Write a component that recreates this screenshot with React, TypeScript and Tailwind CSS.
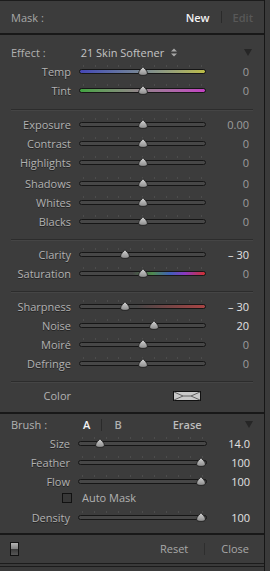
import React from "react";

const font = { fontFamily: '"Open Sans", "DejaVu Sans", sans-serif' };

type Slider = {
  label: string;
  value: string;
  pos: number;
  track?: string;
  bright?: boolean;
};

const ticks = Array.from({ length: 11 });

function Thumb({ pos }: { pos: number }) {
  return (
    <svg
      width="10"
      height="10"
      viewBox="0 0 10 10"
      className="absolute top-[-3px] -translate-x-1/2"
      style={{ left: `${pos}%` }}
    >
      <defs>
        <linearGradient id="thumbFill" x1="0" y1="0" x2="0" y2="1">
          <stop offset="0" stopColor="#d6d6d6" />
          <stop offset="1" stopColor="#8a8a8a" />
        </linearGradient>
      </defs>
      <path
        d="M5 0.6 C6 2.2 9.4 4.8 9.4 7 C9.4 8.7 8 9.4 5 9.4 C2 9.4 0.6 8.7 0.6 7 C0.6 4.8 4 2.2 5 0.6Z"
        fill="url(#thumbFill)"
        stroke="#1c1c1c"
        strokeWidth="0.9"
      />
    </svg>
  );
}

function Track({ pos, track, wide }: { pos: number; track?: string; wide?: boolean }) {
  return (
    <div className={`relative ${wide ? "w-[129px]" : "w-[127px]"} h-[5px]`}>
      <div className="absolute left-[4px] right-[4px] top-[-4px] flex justify-between">
        {ticks.map((_, i) => (
          <span key={i} className="w-px h-[2px] bg-[#4c4c4c]" />
        ))}
      </div>
      <div className={`h-[5px] rounded-full border border-[#161616] ${track ?? "bg-[#474747]"}`} />
      <Thumb pos={pos} />
    </div>
  );
}

function SliderRow({ s, wide }: { s: Slider; wide?: boolean }) {
  return (
    <div className="flex items-center h-[19px]">
      <span
        className={`${wide ? "w-[70px]" : "w-[71px]"} text-right text-[#b2b2b2] [text-shadow:0_1px_0_#222]`}
      >
        {s.label}
      </span>
      <div className={wide ? "ml-[8px]" : "ml-[8px]"}>
        <Track pos={s.pos} track={s.track} wide={wide} />
      </div>
      <span
        className={`flex-1 text-right ${wide ? "pr-[14px]" : "pr-[15px]"} ${
          s.bright ? "text-[#e2e2e2]" : "text-[#9c9c9c]"
        }`}
      >
        {s.value}
      </span>
    </div>
  );
}

function Separator() {
  return <div className="mx-[11px] h-px bg-[#2c2c2c] shadow-[0_1px_0_#454545]" />;
}

function DarkLine() {
  return <div className="h-[2px] bg-[#181818]" />;
}

function DownTriangle() {
  return (
    <svg width="8" height="7" viewBox="0 0 8 7">
      <path d="M0 0 H8 L4 7Z" fill="#262626" />
    </svg>
  );
}

const colorTracks = {
  temp: "bg-gradient-to-r from-[#4646b6] to-[#bcbc44]",
  tint: "bg-gradient-to-r from-[#3fa43f] to-[#c440c4]",
  sat: "bg-[linear-gradient(to_right,#474747_0%,#474747_42%,#4f8a4f_58%,#3f5fb8_72%,#8a38c0_84%,#d03030_100%)]",
  sharp: "bg-[linear-gradient(to_right,#474747_0%,#474747_45%,#a84444_100%)]",
};

const basic: Slider[] = [
  { label: "Exposure", value: "0.00", pos: 50 },
  { label: "Contrast", value: "0", pos: 50 },
  { label: "Highlights", value: "0", pos: 50 },
];
const basic2: Slider[] = [
  { label: "Shadows", value: "0", pos: 50 },
  { label: "Whites", value: "0", pos: 50 },
  { label: "Blacks", value: "0", pos: 50 },
];
const detail: Slider[] = [
  { label: "Sharpness", value: "– 30", pos: 36, track: colorTracks.sharp, bright: true },
  { label: "Noise", value: "20", pos: 59, bright: true },
  { label: "Moiré", value: "0", pos: 50 },
  { label: "Defringe", value: "0", pos: 50 },
];

export default function App() {
  return (
    <div className="w-[270px] h-[571px] bg-[#3a3a3a] flex text-[11px] leading-none" style={font}>
      <div className="w-[265px] h-[571px] flex flex-col border-r border-[#161616]">
        <div className="flex-1 flex flex-col bg-[#3c3c3c]">
          <div className="h-px bg-[#1c1c1c]" />
          {/* header */}
          <div className="h-[32px] flex items-center pl-[11px] pr-[11px]">
            <span className="text-[#a8a8a8]">Mask :</span>
            <span className="ml-auto font-semibold text-[#f2f2f2]">New</span>
            <span className="mx-[11px] w-px h-[12px] bg-[#2a2a2a]" />
            <span className="text-[#585858] font-semibold">Edit</span>
          </div>
          <DarkLine />

          {/* effect */}
          <div className="pt-[8px] pb-[9px]">
            <div className="flex items-center h-[19px] pl-[11px] pr-[12px]">
              <span className="text-[#b2b2b2]">Effect :</span>
              <span className="ml-[35px] text-[#c4c4c4]">21 Skin Softener</span>
              <svg width="6" height="9" viewBox="0 0 6 9" className="ml-[7px]">
                <path d="M0 3.5 L3 0.5 L6 3.5Z M0 5.5 L3 8.5 L6 5.5Z" fill="#a8a8a8" />
              </svg>
              <span className="ml-auto">
                <DownTriangle />
              </span>
            </div>
            <SliderRow s={{ label: "Temp", value: "0", pos: 50, track: colorTracks.temp }} />
            <SliderRow s={{ label: "Tint", value: "0", pos: 50, track: colorTracks.tint }} />
          </div>
          <Separator />

          {/* basic */}
          <div className="pt-[5px] pb-[8px]">
            {basic.map((s) => (
              <SliderRow key={s.label} s={s} />
            ))}
            <div className="mt-[2px]">
              {basic2.map((s) => (
                <SliderRow key={s.label} s={s} />
              ))}
            </div>
          </div>
          <Separator />

          {/* presence */}
          <div className="pt-[5px] pb-[8px]">
            <SliderRow s={{ label: "Clarity", value: "– 30", pos: 36, bright: true }} />
            <SliderRow s={{ label: "Saturation", value: "0", pos: 50, track: colorTracks.sat }} />
          </div>
          <Separator />

          {/* detail */}
          <div className="pt-[5px] pb-[8px]">
            {detail.map((s) => (
              <SliderRow key={s.label} s={s} />
            ))}
          </div>
          <Separator />

          {/* color */}
          <div className="pt-[4px] pb-[7px]">
            <div className="flex items-center h-[19px]">
              <span className="w-[71px] text-right text-[#b2b2b2]">Color</span>
              <svg width="28" height="10" viewBox="0 0 28 10" className="ml-[102px]">
                <rect x="0.5" y="0.5" width="27" height="9" fill="#c9c9c9" stroke="#111" />
                <path d="M1 1 L10 5 L18 5 L27 1 M1 9 L10 5 M18 5 L27 9" stroke="#555" strokeWidth="0.9" fill="none" />
              </svg>
            </div>
          </div>
          <DarkLine />

          {/* brush */}
          <div className="pt-[1px] pb-[6px]">
            <div className="flex items-center h-[19px] pl-[11px] pr-[11px] font-semibold">
              <span className="text-[#b2b2b2] font-normal">Brush :</span>
              <span className="ml-[36px] text-[#f4f4f4]">A</span>
              <span className="ml-[11px] w-px h-[12px] bg-[#2a2a2a]" />
              <span className="ml-[12px] text-[#b0b0b0]">B</span>
              <span className="ml-[51px] text-[#bcbcbc]">Erase</span>
              <span className="ml-auto">
                <DownTriangle />
              </span>
            </div>
            <SliderRow wide s={{ label: "Size", value: "14.0", pos: 17, bright: true }} />
            <SliderRow wide s={{ label: "Feather", value: "100", pos: 95, bright: true }} />
            <SliderRow wide s={{ label: "Flow", value: "100", pos: 95, bright: true }} />
            <div className="flex items-center h-[13px] pl-[62px]">
              <span className="w-[10px] h-[10px] border border-[#111] bg-[#383838]" />
              <span className="ml-[10px] text-[#b2b2b2]">Auto Mask</span>
            </div>
            <div className="mt-[4px]">
              <SliderRow wide s={{ label: "Density", value: "100", pos: 95, bright: true }} />
            </div>
          </div>
          <DarkLine />

          {/* footer */}
          <div className="h-[27px] flex items-center pl-[10px] pr-[15px]">
            <span className="w-[9px] h-[14px] border border-[#111] flex flex-col">
              <span className="flex-1 bg-gradient-to-b from-[#b4b4b4] to-[#7e7e7e]" />
              <span className="flex-1 bg-gradient-to-b from-[#3a3a3a] to-[#565656]" />
            </span>
            <span className="ml-auto text-[#a8a8a8]">Reset</span>
            <span className="mx-[16px] w-px h-[12px] bg-[#2e2e2e]" />
            <span className="text-[#a8a8a8]">Close</span>
          </div>
        </div>
        <div className="h-px bg-[#1c1c1c]" />
        <div className="h-[2px] bg-[#3a3a3a]" />
        <div className="h-px bg-[#1c1c1c]" />
        <div className="h-[4px] bg-[#3a3a3a]" />
      </div>
    </div>
  );
}
